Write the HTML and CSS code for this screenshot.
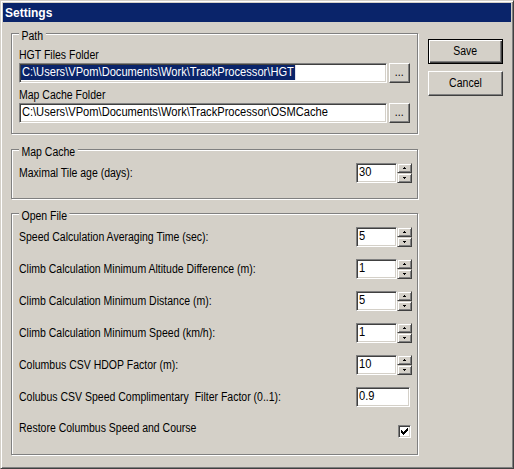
FILE: index.html
```html
<!DOCTYPE html>
<html>
<head>
<meta charset="utf-8">
<title>Settings</title>
<link rel="stylesheet" href="styles.css">
</head>
<body>
<div class="window">
  <div class="titlebar">Settings</div>
  <div class="content">
    <div class="left">
      <div class="group path">
        <span class="legend n">Path</span>
        <div class="lbl"><span class="n">HGT Files Folder</span></div>
        <div class="pathrow">
          <div class="field wide"><span class="sel v">C:\Users\VPom\Documents\Work\TrackProcessor\HGT</span></div>
          <div class="btn browse"><span class="n c">...</span></div>
        </div>
        <div class="lbl gap"><span class="n">Map Cache Folder</span></div>
        <div class="pathrow">
          <div class="field wide"><span class="v">C:\Users\VPom\Documents\Work\TrackProcessor\OSMCache</span></div>
          <div class="btn browse"><span class="n c">...</span></div>
        </div>
      </div>

      <div class="group cache">
        <span class="legend n">Map Cache</span>
        <div class="row">
          <span class="text n">Maximal Tile age (days):</span>
          <div class="ctl spin">
            <div class="field"><span class="v">30</span></div>
            <div class="arrows">
              <div class="arrow"><svg width="3" height="2" viewBox="0 0 3 2"><path d="M1 0h1v1h-1z M0 1h3v1h-3z"/></svg></div>
              <div class="arrow"><svg width="3" height="2" viewBox="0 0 3 2"><path d="M0 0h3v1h-3z M1 1h1v1h-1z"/></svg></div>
            </div>
          </div>
        </div>
      </div>

      <div class="group open">
        <span class="legend n">Open File</span>
        <div class="rows">
          <div class="row">
            <span class="text n">Speed Calculation Averaging Time (sec):</span>
            <div class="ctl spin">
              <div class="field"><span class="v">5</span></div>
              <div class="arrows">
                <div class="arrow"><svg width="3" height="2" viewBox="0 0 3 2"><path d="M1 0h1v1h-1z M0 1h3v1h-3z"/></svg></div>
                <div class="arrow"><svg width="3" height="2" viewBox="0 0 3 2"><path d="M0 0h3v1h-3z M1 1h1v1h-1z"/></svg></div>
              </div>
            </div>
          </div>
          <div class="row">
            <span class="text n">Climb Calculation Minimum Altitude Difference (m):</span>
            <div class="ctl spin">
              <div class="field"><span class="v">1</span></div>
              <div class="arrows">
                <div class="arrow"><svg width="3" height="2" viewBox="0 0 3 2"><path d="M1 0h1v1h-1z M0 1h3v1h-3z"/></svg></div>
                <div class="arrow"><svg width="3" height="2" viewBox="0 0 3 2"><path d="M0 0h3v1h-3z M1 1h1v1h-1z"/></svg></div>
              </div>
            </div>
          </div>
          <div class="row">
            <span class="text n">Climb Calculation Minimum Distance (m):</span>
            <div class="ctl spin">
              <div class="field"><span class="v">5</span></div>
              <div class="arrows">
                <div class="arrow"><svg width="3" height="2" viewBox="0 0 3 2"><path d="M1 0h1v1h-1z M0 1h3v1h-3z"/></svg></div>
                <div class="arrow"><svg width="3" height="2" viewBox="0 0 3 2"><path d="M0 0h3v1h-3z M1 1h1v1h-1z"/></svg></div>
              </div>
            </div>
          </div>
          <div class="row">
            <span class="text n">Climb Calculation Minimum Speed (km/h):</span>
            <div class="ctl spin">
              <div class="field"><span class="v">1</span></div>
              <div class="arrows">
                <div class="arrow"><svg width="3" height="2" viewBox="0 0 3 2"><path d="M1 0h1v1h-1z M0 1h3v1h-3z"/></svg></div>
                <div class="arrow"><svg width="3" height="2" viewBox="0 0 3 2"><path d="M0 0h3v1h-3z M1 1h1v1h-1z"/></svg></div>
              </div>
            </div>
          </div>
          <div class="row">
            <span class="text n">Columbus CSV HDOP Factor (m):</span>
            <div class="ctl spin">
              <div class="field"><span class="v">10</span></div>
              <div class="arrows">
                <div class="arrow"><svg width="3" height="2" viewBox="0 0 3 2"><path d="M1 0h1v1h-1z M0 1h3v1h-3z"/></svg></div>
                <div class="arrow"><svg width="3" height="2" viewBox="0 0 3 2"><path d="M0 0h3v1h-3z M1 1h1v1h-1z"/></svg></div>
              </div>
            </div>
          </div>
          <div class="row">
            <span class="text n">Colubus CSV Speed Complimentary&nbsp; Filter Factor (0..1):</span>
            <div class="ctl">
              <div class="field num"><span class="v">0.9</span></div>
            </div>
          </div>
          <div class="row check">
            <span class="text n">Restore Columbus Speed and Course</span>
            <div class="ctl">
              <div class="checkbox"><svg width="7" height="7" viewBox="0 0 7 7"><path d="M6 0h1v1h-1z M5 1h2v1h-2z M0 2h1v1h-1z M4 2h3v1h-3z M0 3h2v1h-2z M3 3h3v1h-3z M0 4h5v1h-5z M1 5h3v1h-3z M2 6h1v1h-1z"/></svg></div>
            </div>
          </div>
        </div>
      </div>
    </div>

    <div class="buttons">
      <div class="btn default"><span class="n c">Save</span></div>
      <div class="btn"><span class="n c">Cancel</span></div>
    </div>
  </div>
</div>
</body>
</html>
```

FILE: styles.css
```css
* {
  box-sizing: border-box;
}

body {
  margin: 0;
  background: #d4d0c8;
  font-family: "Liberation Sans", Arial, sans-serif;
  font-size: 12.5px;
  color: #000;
}

/* narrow face emulation (MS-style condensed dialog font) */
.n {
  display: inline-block;
  white-space: nowrap;
  transform: scaleX(0.84);
  transform-origin: 0 50%;
}

.n.c {
  transform-origin: 50% 50%;
}

.v {
  display: inline-block;
  white-space: nowrap;
  transform: scaleX(0.89);
  transform-origin: 0 50%;
}

.window {
  width: 514px;
  height: 469px;
  border: 1px solid;
  border-color: #d4d0c8 #404040 #404040 #d4d0c8;
  box-shadow: inset 1px 1px 0 #fff, inset -1px -1px 0 #808080;
  padding: 2px;
  background: #d4d0c8;
  display: flex;
  flex-direction: column;
}

.titlebar {
  height: 19px;
  background: #0a246a;
  color: #fff;
  font-weight: bold;
  font-size: 12px;
  line-height: 18px;
  padding: 1px 0 0 2px;
}

.content {
  display: flex;
  padding: 11px 0 0 8px;
  gap: 10px;
}

.left {
  width: 407px;
  display: flex;
  flex-direction: column;
}

.group {
  position: relative;
  border: 1px solid #808080;
  box-shadow: 1px 1px 0 #fff, inset 1px 1px 0 #fff;
  padding: 13px 5px 15px 7px;
}

.group.path {
  padding: 13px 6px 10px 7px;
}

.group.cache {
  margin-top: 15px;
}

.group.open {
  margin-top: 14px;
}

.legend {
  position: absolute;
  left: 7px;
  top: -5px;
  padding: 0 3px;
  line-height: 15px;
  background: #d4d0c8;
}

.lbl {
  height: 16px;
  line-height: 16px;
}

.lbl.gap {
  margin-top: 4px;
}

.pathrow {
  display: flex;
  gap: 2px;
}

.field {
  height: 20px;
  border: 1px solid;
  border-color: #808080 #fff #fff #808080;
  box-shadow: inset 1px 1px 0 #404040, inset -1px -1px 0 #d4d0c8;
  background: #fff;
  padding: 1px 1px 0 2px;
  line-height: 15px;
  white-space: nowrap;
  overflow: hidden;
}

.field.wide {
  width: 368px;
  padding-left: 1px;
}

.field.wide .v {
  padding-left: 1px;
}

.sel {
  line-height: 15px;
  background: #0a246a;
  color: #fff;
  padding-right: 1px;
}

.btn {
  width: 75px;
  height: 25px;
  display: flex;
  align-items: center;
  justify-content: center;
  border: 1px solid;
  border-color: #fff #404040 #404040 #fff;
  box-shadow: inset -1px -1px 0 #808080;
  background: #d4d0c8;
  line-height: 15px;
}

.btn.browse {
  width: 21px;
  height: 20px;
  padding-bottom: 1px;
}

.btn.default {
  border-color: #000;
  box-shadow: inset 1px 1px 0 #fff, inset -1px -1px 0 #404040, inset -2px -2px 0 #808080;
}

.buttons {
  display: flex;
  flex-direction: column;
  gap: 7px;
  margin-top: 6px;
}

.rows {
  display: flex;
  flex-direction: column;
  gap: 12px;
}

.row {
  display: flex;
  align-items: center;
  justify-content: space-between;
  height: 20px;
  line-height: 15px;
}

.ctl {
  width: 56px;
  flex: none;
  display: flex;
}

.spin .field {
  width: 41px;
}

.field.num {
  width: 54px;
}

.arrows {
  width: 15px;
  display: flex;
  flex-direction: column;
}

.arrow {
  height: 10px;
  display: flex;
  align-items: center;
  justify-content: center;
  border: 1px solid;
  border-color: #d4d0c8 #404040 #404040 #d4d0c8;
  box-shadow: inset 1px 1px 0 #fff, inset -1px -1px 0 #808080;
  background: #d4d0c8;
}

.arrow svg {
  display: block;
  fill: #000;
}

.row.check {
  align-items: flex-start;
}

.row.check .text {
  margin-top: 2px;
}

.checkbox {
  width: 13px;
  height: 13px;
  margin: 6px 1px 0 auto;
  border: 1px solid;
  border-color: #808080 #fff #fff #808080;
  box-shadow: inset 1px 1px 0 #404040, inset -1px -1px 0 #d4d0c8;
  background: #fff;
  padding: 2px;
}

.checkbox svg {
  display: block;
  fill: #000;
}
```
